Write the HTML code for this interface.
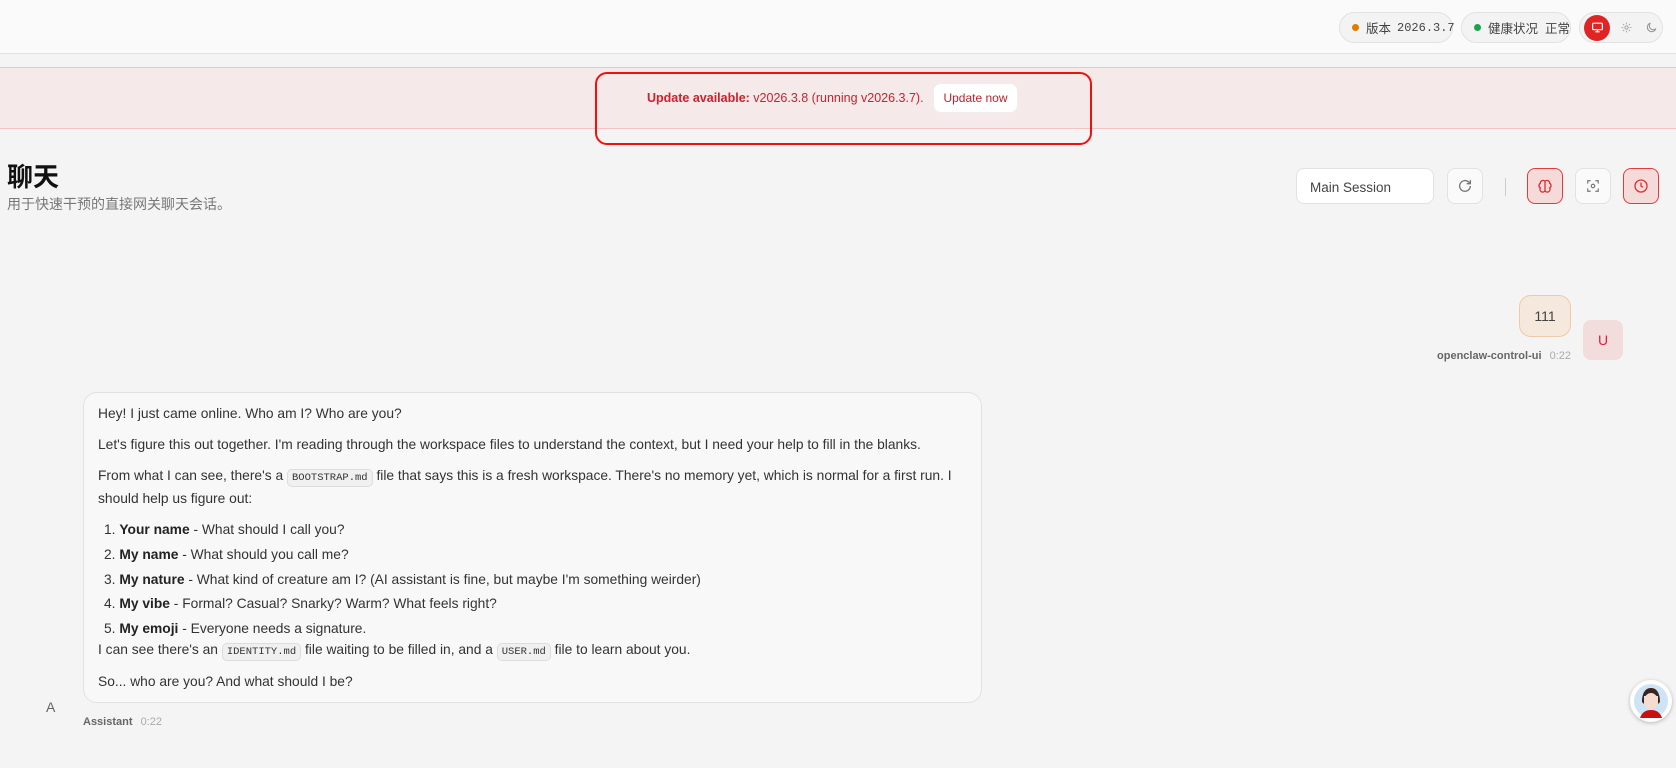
<!DOCTYPE html>
<html><head><meta charset="utf-8"><style>
*{box-sizing:border-box;margin:0;padding:0}
body{width:1676px;height:768px;background:#f4f4f4;font-family:"Liberation Sans","Noto Sans CJK SC",sans-serif;position:relative;overflow:hidden;color:#333}
.abs{position:absolute}
.hdr{left:0;top:0;width:1676px;height:54px;background:#fafafa;border-bottom:1px solid #e2e2e2}
.pill{top:12px;height:31px;border:1px solid #e2e2e2;border-radius:16px;background:#f3f3f3;font-size:12.5px;display:flex;align-items:center;padding-left:12px;color:#444;white-space:nowrap}
.dot{width:7px;height:7px;border-radius:50%;margin-right:7px;flex:none}
.banner{left:0;top:67px;width:1676px;height:62px;background:#f5e9e9;border-top:1px solid #f4c3c3;border-bottom:1px solid #f4c3c3}
.btn{width:36px;height:36px;border-radius:8px;border:1px solid #e2e2e2;background:#fafafa;display:flex;align-items:center;justify-content:center}
.btn.r{background:#f5dada;border-color:#e23b3b}
.t{position:absolute;left:98px;font-size:13.8px;color:#333;white-space:nowrap}
code{font-family:"Liberation Mono",monospace;font-size:10.5px;background:#f0f0f0;border:1px solid #ddd;border-radius:5px;padding:2px 4px}
b{color:#222}
</style></head><body>
<div class="abs hdr"></div>
<div class="abs pill" style="left:1339px;width:114px"><span class="dot" style="background:#e07b00"></span>版本<span style="font-family:'Liberation Mono',monospace;margin-left:6px;font-size:12px">2026.3.7</span></div>
<div class="abs pill" style="left:1461px;width:110px"><span class="dot" style="background:#1aa34a"></span>健康状况<span style="margin-left:7px">正常</span></div>
<div class="abs pill" style="left:1579px;width:84px;padding-left:4px">
<div style="width:26px;height:26px;border-radius:50%;background:#e02424;display:flex;align-items:center;justify-content:center"><svg width="13" height="13" viewBox="0 0 24 24" fill="none" stroke="#fff" stroke-width="2.2"><rect x="3" y="4" width="18" height="12" rx="2"/><path d="M8 20h8M12 16v4"/></svg></div>
<svg style="margin-left:10px" width="13" height="13" viewBox="0 0 24 24" fill="none" stroke="#aaa" stroke-width="2"><circle cx="12" cy="12" r="3"/><path d="M12 3v3M12 18v3M3 12h3M18 12h3M5.6 5.6l2 2M16.4 16.4l2 2M5.6 18.4l2-2M16.4 7.6l2-2"/></svg>
<svg style="margin-left:12px" width="13" height="13" viewBox="0 0 24 24" fill="none" stroke="#999" stroke-width="2"><path d="M20 14A8 8 0 1 1 10 4a6 6 0 0 0 10 10z"/></svg>
</div>
<div class="abs banner"></div>
<div class="abs" style="left:595px;top:72px;width:497px;height:73px;border:2px solid #f01010;border-radius:12px"></div>
<div class="abs" style="left:647px;top:91px;font-size:12.5px;color:#d0202a;white-space:nowrap"><b style="color:#d0202a">Update available:</b> v2026.3.8 (running v2026.3.7).</div>
<div class="abs" style="left:933px;top:83px;width:85px;height:30px;background:#fff;border:1px solid #eee;border-radius:8px;font-size:12px;color:#c0202a;display:flex;align-items:center;justify-content:center;white-space:nowrap">Update now</div>
<div class="abs" style="left:7px;top:157px;font-size:26px;font-weight:bold;color:#111">聊天</div>
<div class="abs" style="left:7px;top:194px;font-size:14px;color:#777">用于快速干预的直接网关聊天会话。</div>
<div class="abs" style="left:1296px;top:168px;width:138px;height:36px;background:#fff;border:1px solid #e2e2e2;border-radius:8px;font-size:13.5px;color:#444;padding:11px 0 0 13px">Main Session</div>
<div class="abs btn" style="left:1447px;top:168px"><svg width="16" height="16" viewBox="0 0 24 24" fill="none" stroke="#777" stroke-width="2"><path d="M20 12a8 8 0 1 1-2.3-5.7L20 8.5M20 3v5.5h-5.5"/></svg></div>
<div class="abs" style="left:1505px;top:178px;width:1px;height:18px;background:#ccc"></div>
<div class="abs btn r" style="left:1527px;top:168px"><svg width="16" height="16" viewBox="0 0 24 24" fill="none" stroke="#e03030" stroke-width="2"><path d="M12 4v16M12 5a4 4 0 0 0-7 3 4 4 0 0 0 0 7 4 4 0 0 0 7 4M12 5a4 4 0 0 1 7 3 4 4 0 0 1 0 7 4 4 0 0 1-7 4"/></svg></div>
<div class="abs btn" style="left:1575px;top:168px"><svg width="14" height="14" viewBox="0 0 24 24" fill="none" stroke="#777" stroke-width="2"><path d="M3 8V3h5M16 3h5v5M21 16v5h-5M8 21H3v-5"/><circle cx="12" cy="12" r="3"/></svg></div>
<div class="abs btn r" style="left:1623px;top:168px"><svg width="16" height="16" viewBox="0 0 24 24" fill="none" stroke="#e03030" stroke-width="2"><circle cx="12" cy="12" r="9"/><path d="M12 7v5l3 2"/></svg></div>
<div class="abs" style="left:1519px;top:295px;width:52px;height:42px;background:#f5e8dc;border:1px solid #f0c9a8;border-radius:12px;font-size:14px;color:#444;display:flex;align-items:center;justify-content:center">111</div>
<div class="abs" style="left:1583px;top:320px;width:40px;height:40px;background:#f3dcdc;border-radius:8px;color:#e02040;font-size:14px;display:flex;align-items:center;justify-content:center">U</div>
<div class="abs" style="left:1360px;top:350px;width:211px;text-align:right;font-size:11px;color:#666;white-space:nowrap"><b style="color:#666">openclaw-control-ui</b> <span style="color:#aaa;margin-left:5px">0:22</span></div>
<div class="abs" style="left:83px;top:392px;width:899px;height:311px;background:#f8f8f8;border:1px solid #e2e2e2;border-radius:14px"></div>
<div class="t" style="top:406px">Hey! I just came online. Who am I? Who are you?</div>
<div class="t" style="top:437px">Let's figure this out together. I'm reading through the workspace files to understand the context, but I need your help to fill in the blanks.</div>
<div class="t" style="top:468px">From what I can see, there's a <code>BOOTSTRAP.md</code> file that says this is a fresh workspace. There's no memory yet, which is normal for a first run. I</div>
<div class="t" style="top:491px">should help us figure out:</div>
<div class="t" style="top:522px;left:104px">1. <b>Your name</b> - What should I call you?</div>
<div class="t" style="top:547px;left:104px">2. <b>My name</b> - What should you call me?</div>
<div class="t" style="top:572px;left:104px">3. <b>My nature</b> - What kind of creature am I? (AI assistant is fine, but maybe I'm something weirder)</div>
<div class="t" style="top:596px;left:104px">4. <b>My vibe</b> - Formal? Casual? Snarky? Warm? What feels right?</div>
<div class="t" style="top:621px;left:104px">5. <b>My emoji</b> - Everyone needs a signature.</div>
<div class="t" style="top:642px">I can see there's an <code>IDENTITY.md</code> file waiting to be filled in, and a <code>USER.md</code> file to learn about you.</div>
<div class="t" style="top:674px">So... who are you? And what should I be?</div>
<div class="abs" style="left:46px;top:699px;font-size:14px;color:#666">A</div>
<div class="abs" style="left:83px;top:716px;font-size:11px;color:#666;white-space:nowrap"><b style="color:#666">Assistant</b> <span style="color:#aaa;margin-left:5px">0:22</span></div>
<div class="abs" style="left:1630px;top:680px;width:42px;height:42px;border-radius:50%;background:#fff;box-shadow:0 1px 4px rgba(0,0,0,.25);overflow:hidden">
<svg width="42" height="42" viewBox="0 0 42 42"><circle cx="21" cy="21" r="17" fill="#cfe3f7"/><path d="M12 22c0-10 4-14 9-14s9 4 9 14l-2 2V16h-14v8z" fill="#3a2420"/><ellipse cx="21" cy="21" rx="7" ry="8" fill="#f6dccf"/><path d="M10 38c2-6 6-8 11-8s9 2 11 8z" fill="#c81010"/></svg></div>
</body></html>
